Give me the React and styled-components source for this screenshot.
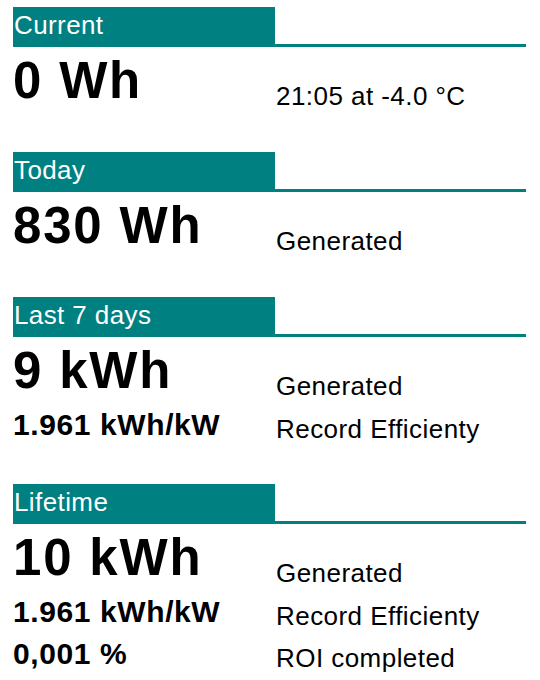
import React from "react";
import styled, { createGlobalStyle } from "styled-components";

const GlobalStyle = createGlobalStyle`
  body {
    margin: 0;
    background: #fff;
    color: #000;
    font-family: "Liberation Sans", Arial, Helvetica, sans-serif;
  }
`;

const Page = styled.div`
  padding: 7px 14px 0 13px;
`;

const Section = styled.section`
  & + & {
    margin-top: 32px;
  }
`;

const Header = styled.div`
  display: flex;
  height: 40px;
`;

const Title = styled.div`
  width: 262px;
  box-sizing: border-box;
  padding-left: 1px;
  background: #008080;
  color: #fff;
  font-size: 26px;
  line-height: 37px;
  letter-spacing: 0.4px;
`;

const Rule = styled.div`
  flex: 1;
  border-bottom: 3px solid #008080;
`;

const Row = styled.div`
  display: grid;
  grid-template-columns: 263px 1fr;
  align-items: start;
  height: ${p => (p.$big ? 65 : 42)}px;
  margin-top: ${p => (p.$big ? 8 : 0)}px;
`;

const Value = styled.div`
  font-weight: bold;
  font-size: ${p => (p.$big ? 51 : 30)}px;
  line-height: ${p => (p.$big ? 51 : 30)}px;
  letter-spacing: ${p => (p.$big ? 1.8 : 0.6)}px;
  white-space: nowrap;
`;

const Label = styled.div`
  font-size: 26px;
  line-height: 30px;
  letter-spacing: 0.45px;
  padding-top: ${p => (p.$big ? 26 : 4)}px;
  white-space: nowrap;
`;

const sections = [
  { title: "Current", rows: [["0 Wh", "21:05 at -4.0 °C"]] },
  { title: "Today", rows: [["830 Wh", "Generated"]] },
  {
    title: "Last 7 days",
    rows: [
      ["9 kWh", "Generated"],
      ["1.961 kWh/kW", "Record Efficienty"],
    ],
  },
  {
    title: "Lifetime",
    rows: [
      ["10 kWh", "Generated"],
      ["1.961 kWh/kW", "Record Efficienty"],
      ["0,001 %", "ROI completed"],
    ],
  },
];

export default function App() {
  return (
    <Page>
      <GlobalStyle />
      {sections.map(s => (
        <Section key={s.title}>
          <Header>
            <Title>{s.title}</Title>
            <Rule />
          </Header>
          {s.rows.map(([value, label], i) => (
            <Row key={i} $big={i === 0}>
              <Value $big={i === 0}>{value}</Value>
              <Label $big={i === 0}>{label}</Label>
            </Row>
          ))}
        </Section>
      ))}
    </Page>
  );
}
